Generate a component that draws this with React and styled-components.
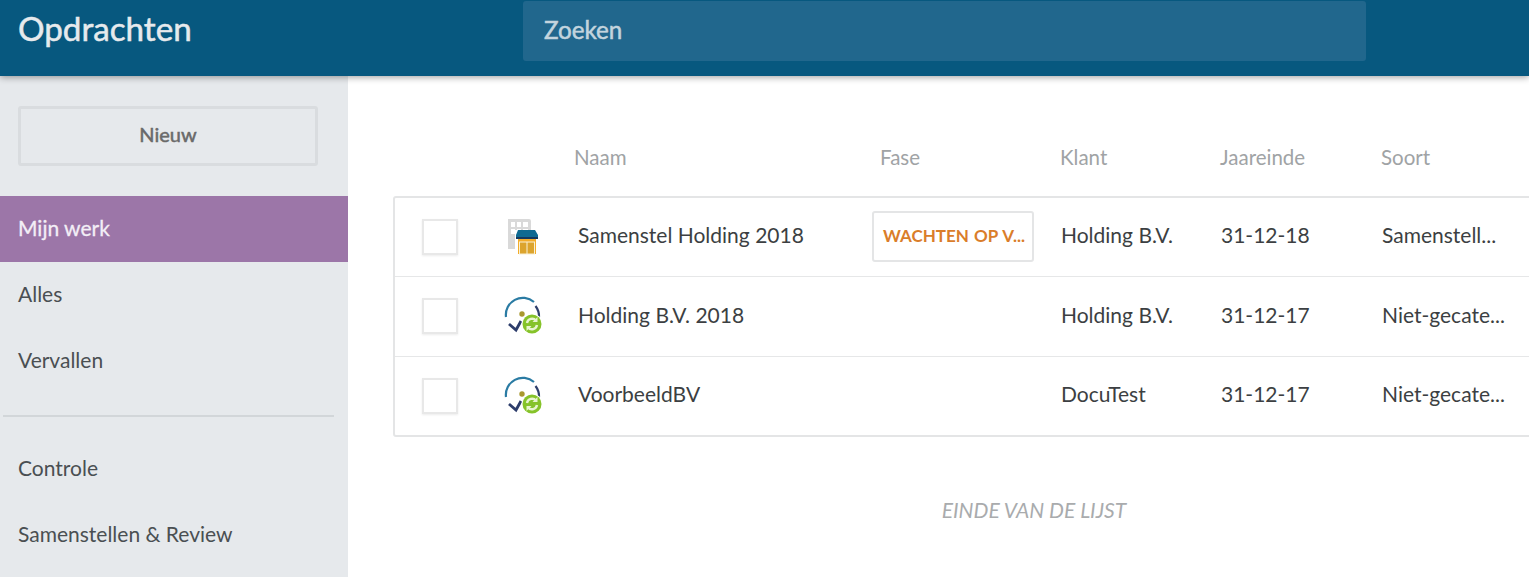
import React from "react";
import styled, { createGlobalStyle } from "styled-components";

const Global = createGlobalStyle`
  html, body { margin: 0; padding: 0; height: 577px; overflow: hidden; background: #fff; }
  body { font-family: Lato, "Liberation Sans", sans-serif; }
  * { box-sizing: border-box; }
`;

const Page = styled.div`
  width: 1529px;
  height: 577px;
  display: flex;
  flex-direction: column;
  overflow: hidden;
`;
const Header = styled.header`
  height: 76px;
  flex: none;
  background: #07587f;
  box-shadow: 0 1px 7px rgba(0, 0, 0, 0.4);
  position: relative;
  z-index: 2;
  display: flex;
  align-items: flex-start;
`;
const Title = styled.h1`
  width: 523px;
  margin: 0;
  padding: 8px 0 0 18px;
  font-size: 33.2px;
  line-height: 40px;
  font-weight: 400;
  -webkit-text-stroke: 0.5px #e6eaed;
  color: #e6eaed;
`;
const Search = styled.div`
  width: 843px;
  height: 60px;
  margin-top: 1px;
  padding: 14px 0 0 21px;
  background: #21678d;
  border-radius: 3px;
  font-size: 24.2px;
  line-height: 29px;
  font-weight: 400;
  -webkit-text-stroke: 0.5px #c3d4de;
  color: #c3d4de;
`;
const Body = styled.div`
  flex: 1;
  display: flex;
  min-height: 0;
`;
const Side = styled.aside`
  width: 348px;
  flex: none;
  background: #e6e9ec;
  padding-top: 30px;
`;
const NewButton = styled.div`
  width: 300px;
  height: 60px;
  margin: 0 0 30px 18px;
  padding-bottom: 4px;
  border: 3px solid #d9dcdf;
  border-radius: 3px;
  display: flex;
  align-items: center;
  justify-content: center;
  font-size: 20px;
  font-weight: 400;
  -webkit-text-stroke: 0.5px #6a6a6a;
  color: #6a6a6a;
`;
const NavItem = styled.div`
  height: 66px;
  padding: 0 0 4px 18px;
  display: flex;
  align-items: center;
  font-size: 21px;
  color: ${p => (p.$active ? "#f3eef6" : "#4a4f52")};
  background: ${p => (p.$active ? "#9c76a8" : "transparent")};
  -webkit-text-stroke: ${p => (p.$active ? "0.3px #f3eef6" : "0")};
`;
const Divider = styled.hr`
  width: 331px;
  margin: 21px 0 19px 3px;
  border: 0;
  border-top: 2px solid #d2d6d9;
`;
const Main = styled.main`
  flex: 1;
  min-width: 0;
  overflow: hidden;
  padding: 67px 0 0 45px;
`;
const Content = styled.div`
  width: 1282px;
`;
const HeadRow = styled.div`
  display: grid;
  grid-template-columns: 180px 306px 180px 160px 161px 1fr;
  height: 27px;
  margin-bottom: 26px;
  padding-left: 1px;
  align-items: center;
  font-size: 20.5px;
  color: #a0a3a5;
`;
const List = styled.div`
  border: 2px solid #e4e5e6;
  border-radius: 3px;
`;
const Row = styled.div`
  display: grid;
  grid-template-columns: 109px 74px 294px 189px 160px 161px 125px;
  height: ${p => p.$h}px;
  align-items: center;
  font-size: 21px;
  color: #3c3f42;
  & + & { border-top: 1px solid #e6e7e8; }
`;
const CheckCell = styled.div`
  padding-left: 27px;
  margin-bottom: 1px;
  display: flex;
`;
const Check = styled.div`
  width: 36px;
  height: 36px;
  border: 2px solid #e8e8e8;
  box-shadow: 0 1px 2px rgba(0,0,0,0.08);
  background: #fff;
`;
const Cell = styled.div`
  padding-bottom: 5px;
  white-space: nowrap;
`;
const IconCell = styled.div`
  display: flex;
  align-items: center;
  margin-top: -1px;
`;
const PhaseCell = styled.div`
  display: flex;
  align-items: center;
  margin-bottom: 1px;
`;
const Phase = styled.div`
  width: 162px;
  height: 51px;
  border: 2px solid #e4e5e6;
  border-radius: 3px;
  background: #fff;
  display: flex;
  align-items: center;
  padding: 0 0 2px 9px;
  font-size: 17px;
  font-weight: 700;
  word-spacing: 1px;
  color: #da7d2a;
  white-space: nowrap;
`;
const End = styled.div`
  margin-top: 60px;
  text-align: center;
  font-size: 21px;
  font-style: italic;
  color: #a9abad;
`;

const ShopIcon = () => (
  <svg width="40" height="40" viewBox="0 0 40 40">
    <path fill="#d9d9d9" fillRule="evenodd" d="M4 2h21a2 2 0 0 1 2 2v12H11v16H4zM7 5v5h4V5zm6 0v5h4V5zm6 0v5h5V5zM7 12v5h4v-5zm6 0v2h4v-2zm6 0v2h5v-2z" />
    <path fill="#fff" d="M11 13h25v25H11z" />
    <path fill="#0f6a92" d="M14 13h17l3 5v3H12v-3z" />
    <path fill="#14395f" d="M12 20h22v2H12z" />
    <rect x="14" y="22" width="18" height="15" fill="#f3ad2b" />
    <rect x="15.500" y="25" width="15" height="12" fill="#dca42e" stroke="#f9f0d4" strokeWidth="1" />
    <path stroke="#f9f0d4" strokeWidth="1" d="M23 25v12" />
  </svg>
);
const SyncIcon = () => (
  <svg width="40" height="40" viewBox="0 0 40 40">
    <path fill="none" stroke="#2a7ba3" strokeWidth="2.200" d="M2 21A17 17 0 0 1 30 6" />
    <path fill="none" stroke="#2d3d6b" strokeWidth="2.200" d="M31.500 10a17 17 0 0 1 3.500 11" />
    <circle cx="18" cy="18" r="2.700" fill="#a9982f" />
    <path fill="none" stroke="#2d3d6b" strokeWidth="2.800" d="M5 28l7 6 5-9" />
    <circle cx="28" cy="28" r="10.500" fill="#fff" />
    <circle cx="28" cy="28" r="9.500" fill="#86c32a" />
    <path fill="none" stroke="#e8f5d0" strokeWidth="2.400" d="M23 27a5.200 5.200 0 0 1 9-2.500M33 29a5.200 5.200 0 0 1-9 2.500" />
    <path fill="#e8f5d0" d="M33.500 21v5h-5zM22.500 35v-5h5z" />
  </svg>
);

const rows = [
  { h: 78, icon: <ShopIcon />, name: "Samenstel Holding 2018", phase: "WACHTEN OP V...", client: "Holding B.V.", date: "31-12-18", kind: "Samenstell..." },
  { h: 80, icon: <SyncIcon />, name: "Holding B.V. 2018", client: "Holding B.V.", date: "31-12-17", kind: "Niet-gecate..." },
  { h: 79, icon: <SyncIcon />, name: "VoorbeeldBV", client: "DocuTest", date: "31-12-17", kind: "Niet-gecate..." },
];

export default function App() {
  return (
    <Page>
      <Global />
      <Header>
        <Title>Opdrachten</Title>
        <Search>Zoeken</Search>
      </Header>
      <Body>
        <Side>
          <NewButton>Nieuw</NewButton>
          <NavItem $active>Mijn werk</NavItem>
          <NavItem>Alles</NavItem>
          <NavItem>Vervallen</NavItem>
          <Divider />
          <NavItem>Controle</NavItem>
          <NavItem>Samenstellen &amp; Review</NavItem>
        </Side>
        <Main>
          <Content>
            <HeadRow>
              <span />
              <span>Naam</span>
              <span>Fase</span>
              <span>Klant</span>
              <span>Jaareinde</span>
              <span>Soort</span>
            </HeadRow>
            <List>
              {rows.map(r => (
                <Row key={r.name} $h={r.h}>
                  <CheckCell><Check /></CheckCell>
                  <IconCell>{r.icon}</IconCell>
                  <Cell>{r.name}</Cell>
                  <PhaseCell>{r.phase && <Phase>{r.phase}</Phase>}</PhaseCell>
                  <Cell>{r.client}</Cell>
                  <Cell>{r.date}</Cell>
                  <Cell>{r.kind}</Cell>
                </Row>
              ))}
            </List>
            <End>EINDE VAN DE LIJST</End>
          </Content>
        </Main>
      </Body>
    </Page>
  );
}
